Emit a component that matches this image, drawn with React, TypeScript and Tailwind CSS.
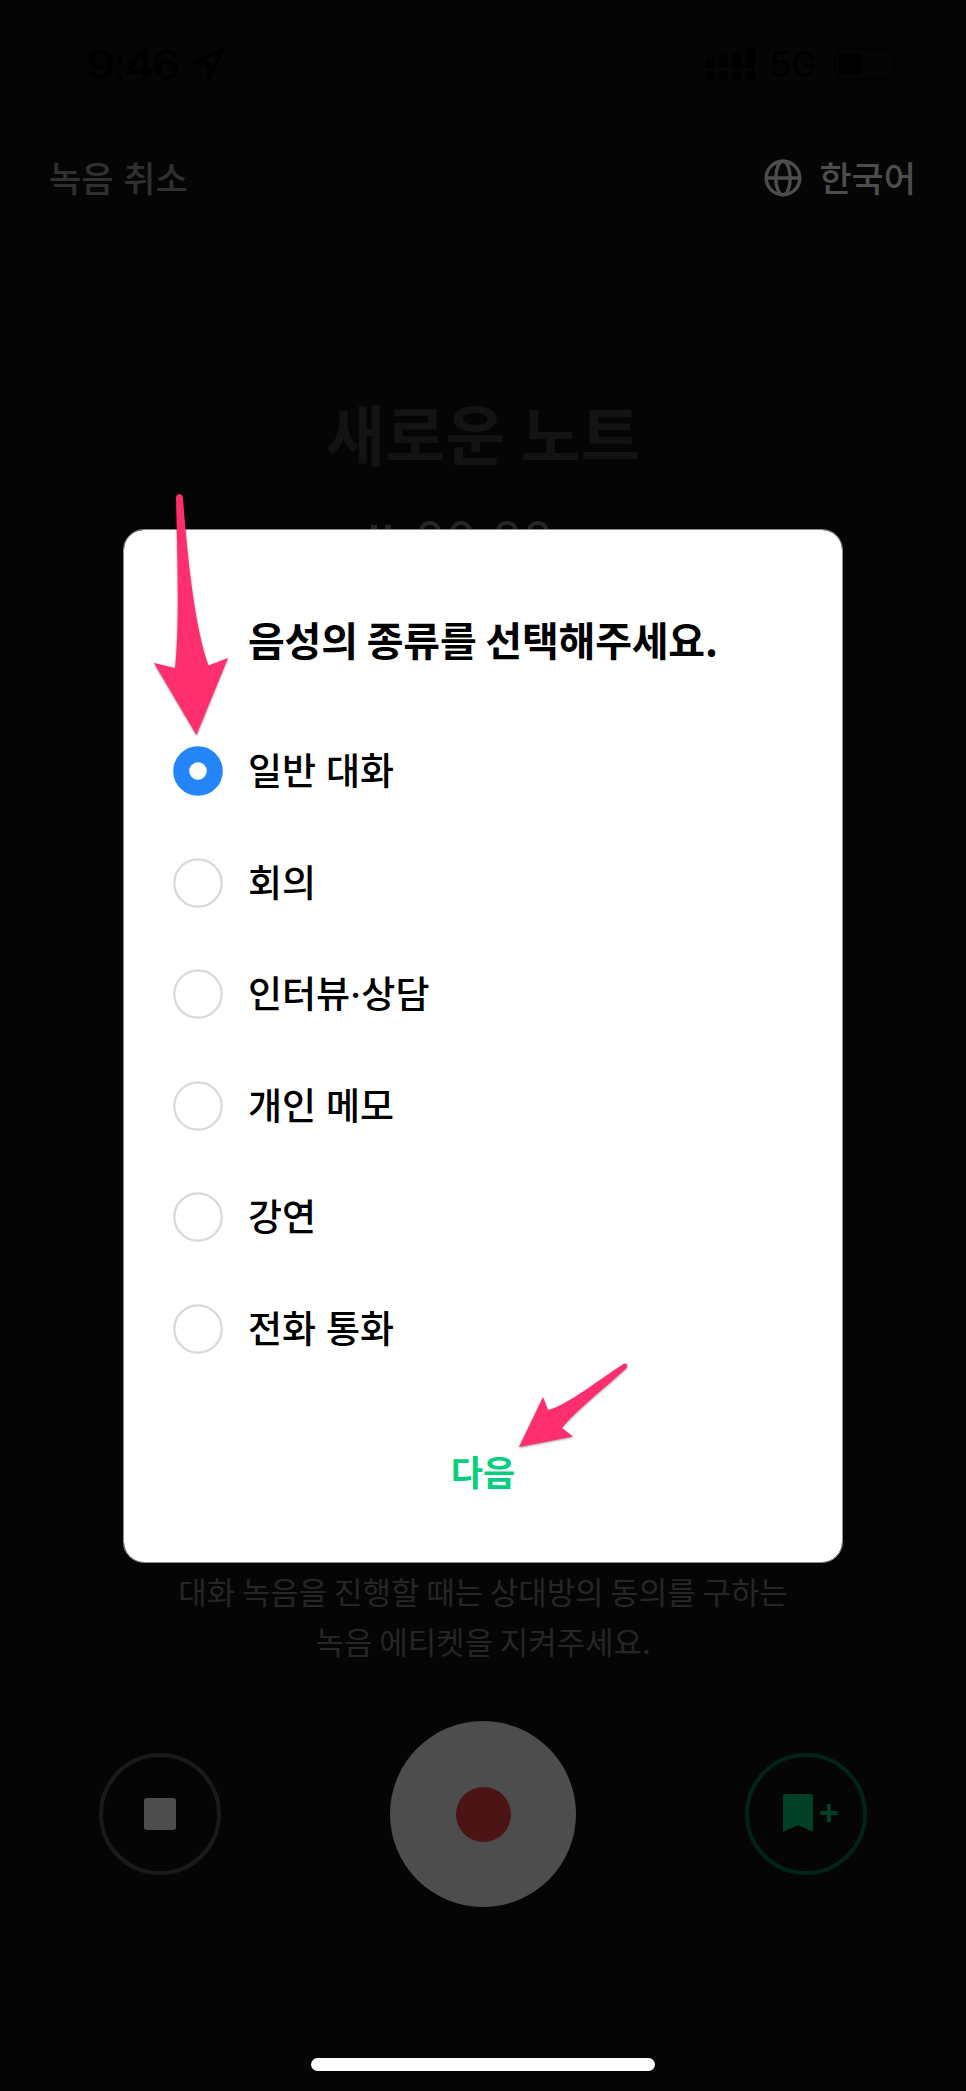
import React, { useState } from 'react';

const VOICE_TYPES = ['일반 대화', '회의', '인터뷰·상담', '개인 메모', '강연', '전화 통화'];

const StatusBar = () => (
  <div className="h-[128px] pt-[45px] pl-[87px] pr-[64px] flex items-start justify-between text-black">
    <div className="flex items-center gap-[12px]">
      <span className="w-[92px] font-['Inter'] text-[43px] leading-[38px] font-semibold tracking-[-1.6px]">9:46</span>
      <svg width="34" height="34" viewBox="0 0 34 34" fill="none" stroke="currentColor" strokeWidth="4" strokeLinejoin="round">
        <path d="M31 3 3 15.500 17.500 16.500 18.500 31z" />
      </svg>
    </div>
    <div className="flex items-center">
      <svg width="49" height="36" viewBox="0 0 49 36" fill="currentColor">
        <rect x="0" y="11" width="9" height="11" rx="3" />
        <rect x="13" y="9" width="9" height="13" rx="3" />
        <rect x="26" y="5" width="9" height="17" rx="3" />
        <rect x="40" y="1" width="9" height="21" rx="3" />
        <rect x="0" y="25" width="9" height="9" rx="3" />
        <rect x="13" y="25" width="9" height="9" rx="3" />
        <rect x="26" y="25" width="9" height="9" rx="3" />
        <rect x="40" y="25" width="9" height="9" rx="3" />
      </svg>
      <span className="ml-[15px] w-[47px] font-['Inter'] text-[35px] leading-[38px] font-medium tracking-[-0.7px]">5G</span>
      <svg className="ml-4" width="69" height="32" viewBox="0 0 69 32">
        <rect x="1.500" y="1.500" width="59" height="29" rx="8" fill="none" stroke="#020202" strokeWidth="2.500" />
        <rect x="4.500" y="4.500" width="25" height="23" rx="5" fill="currentColor" />
        <path d="M64 12v8c4-1.500 4-6.500 0-8z" fill="#020202" />
      </svg>
    </div>
  </div>
);

const GlobeIcon = () => (
  <svg width="38" height="38" viewBox="0 0 38 38" fill="none" stroke="currentColor" strokeWidth="3.400">
    <circle cx="19" cy="19" r="16.800" />
    <ellipse cx="19" cy="19" rx="7.200" ry="16.800" />
    <path d="M2 19h34" />
  </svg>
);

const RadioMark: React.FC<{ checked: boolean }> = ({ checked }) => (
  <svg width="50" height="50" viewBox="0 0 50 50" fill="none">
    {checked ? (
      <circle cx="25" cy="25" r="16.800" stroke="#2385f7" strokeWidth="16" />
    ) : (
      <circle cx="25" cy="25" r="23.700" stroke="#d9d9d9" strokeWidth="2.300" />
    )}
  </svg>
);

const RecordControls = () => (
  <div className="mt-[56px] px-[99px] flex items-center justify-between">
    <button className="size-[122px] rounded-full border-4 border-[#1a1a1a] flex items-center justify-center">
      <span className="size-8 rounded-[3px] bg-[#4d4d4d]" />
    </button>
    <button className="size-[186px] rounded-full bg-[#4d4d4d] flex items-center justify-center">
      <span className="size-[55px] rounded-full bg-[#4c1414]" />
    </button>
    <button className="size-[122px] rounded-full border-4 border-[#022418] flex items-center justify-center pl-[8px] pb-[2px]">
      <svg width="55" height="38" viewBox="0 0 55 38" fill="#004026">
        <path d="M2 0h26a2 2 0 0 1 2 2v34.500q0 1.500-1.500.800L15 31 1.500 37.300Q0 38 0 36.500V2a2 2 0 0 1 2-2z" />
        <path d="M43.800 10h4v7h6.700v4h-6.700v7h-4v-7H37.200v-4h6.600z" />
      </svg>
    </button>
  </div>
);

// Hand-drawn style pointers laid over the dialog
const Pointers = () => (
  <svg
    className="absolute inset-0 pointer-events-none drop-shadow-[0_1px_1px_rgba(0,0,0,0.4)]"
    width="966"
    height="2091"
    viewBox="0 0 966 2091"
    fill="#ff2e6e"
  >
    <path d="M176 498C176 492.500 182.500 492.500 183 498C187 552 194 625 208.500 665.500L228 658L196.500 735L154 663L175 668C180 625 177 545 176 498Z" />
    <path d="M623.500 1364C626.500 1362 628.500 1366 626 1368.500C606 1387 572 1414 562 1428L573 1436.500L519 1447L543 1397L548 1410C566 1406 600 1379 623.500 1364Z" />
  </svg>
);

export default function App() {
  const [selected, setSelected] = useState(0);

  return (
    <div className="relative w-[966px] h-[2091px] overflow-hidden bg-[#050505] font-['Noto_Sans_CJK_KR',sans-serif]">
      <StatusBar />

      <header className="h-[100px] pl-[49px] pr-[50px] flex items-center justify-between text-[35px] leading-[50px] font-medium">
        <button className="pb-[3px] text-[#303030] [word-spacing:2px]">녹음 취소</button>
        <button className="flex items-center gap-[17px] text-[#4d4d4d]">
          <GlobeIcon />
          <span className="pb-[3px]">한국어</span>
        </button>
      </header>

      <main>
        <h1 className="mt-[154px] h-[100px] text-center text-[65px] leading-[100px] font-bold text-[#131313] [word-spacing:1px]">새로운 노트</h1>
        <div className="mt-[26px] ml-[371px] h-[60px] flex items-center gap-[24px] text-[#262626]">
          <span className="w-5 h-[26px] border-x-[6px] border-[#262626]" />
          <span className="font-['Inter'] text-[47px] leading-[60px] tracking-[1.6px]">00:20</span>
        </div>
        <p className="mt-[998px] text-center text-[31px] leading-[49.500px] tracking-[-0.1px] text-[#262626]">
          대화 녹음을 진행할 때는 상대방의 동의를 구하는
          <br />
          녹음 에티켓을 지켜주세요.
        </p>
        <RecordControls />
      </main>

      {/* Voice type dialog */}
      <div className="absolute inset-0 pt-[529px] flex flex-col items-center">
        <section className="w-[720px] h-[1034px] rounded-[21px] border border-[#8a8a8a] bg-white bg-clip-padding text-black">
          <h2 className="pt-[79px] pl-[124px] text-[40px] leading-[60px] font-bold tracking-[-0.2px] whitespace-nowrap">음성의 종류를 선택해주세요.</h2>
          <div className="mt-[77px] pl-[49px] flex flex-col gap-[61.500px]">
            {VOICE_TYPES.map((label, i) => (
              <button key={label} onClick={() => setSelected(i)} className="h-[50px] flex items-center gap-[25px]">
                <RadioMark checked={selected === i} />
                <span className="pt-[2px] font-['Inter','Noto_Sans_CJK_KR',sans-serif] text-[37px] leading-[50px] font-medium">{label}</span>
              </button>
            ))}
          </div>
          <button className="mt-[92px] w-full text-center text-[35px] leading-[50px] font-bold text-[#03cf7f]">다음</button>
        </section>
      </div>

      <Pointers />

      <div className="absolute bottom-5 left-[311px] w-[344px] h-[13px] rounded-full bg-white" />
    </div>
  );
}
